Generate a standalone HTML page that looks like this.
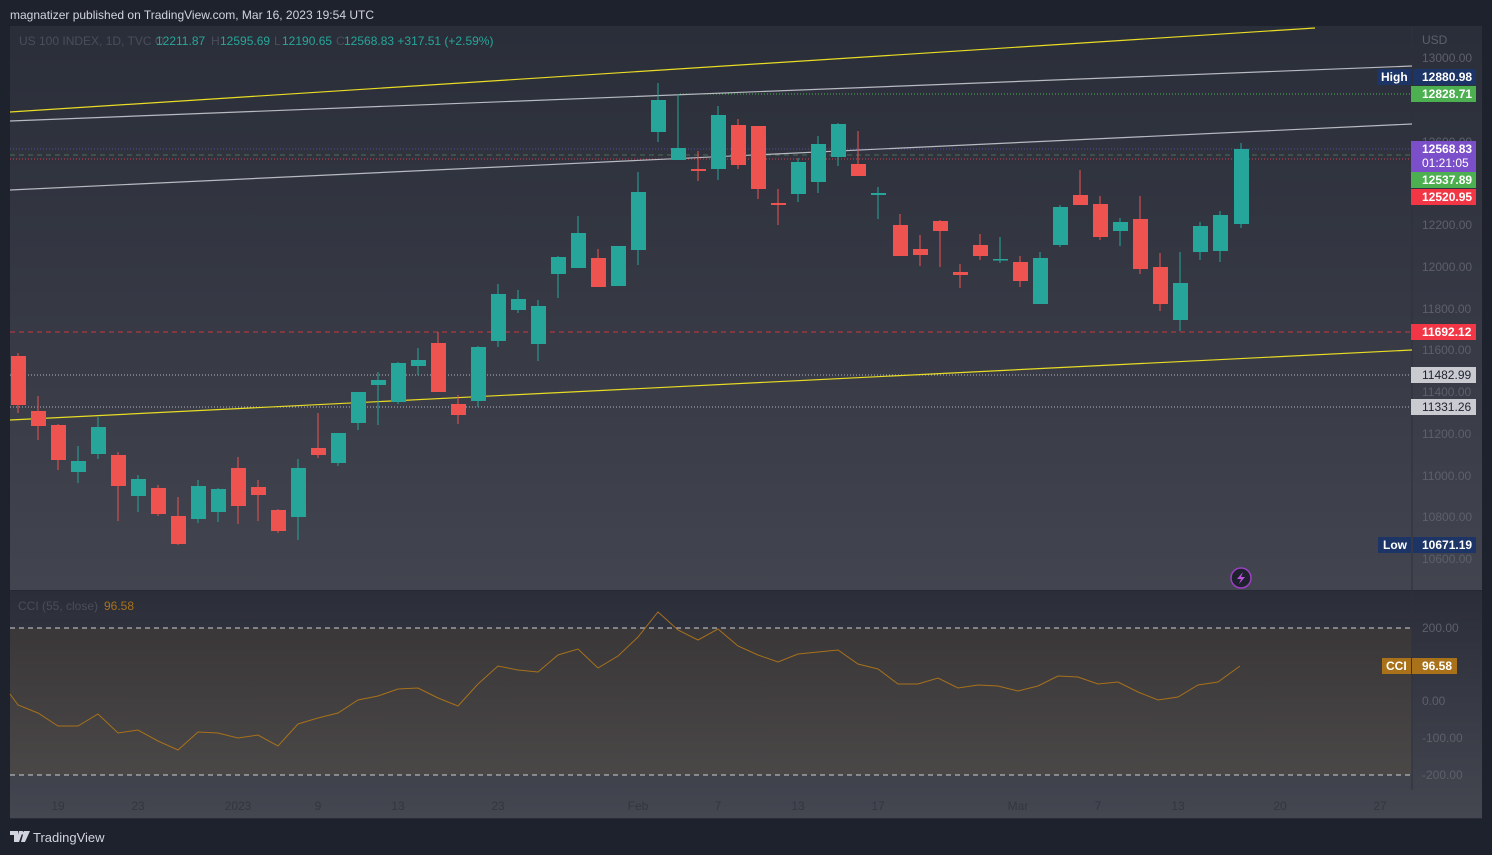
<!DOCTYPE html><html><head><meta charset="utf-8"><style>
body{margin:0;width:1492px;height:855px;background:#1e222d;overflow:hidden;font-family:"Liberation Sans",sans-serif}
svg{position:absolute;left:0;top:0}
text{font-family:"Liberation Sans",sans-serif}
</style></head><body>
<svg width="1492" height="855" viewBox="0 0 1492 855">
<defs>
<linearGradient id="g1" x1="0" y1="0" x2="0" y2="1"><stop offset="0" stop-color="#2a2e39"/><stop offset="1" stop-color="#42444f"/></linearGradient>
<linearGradient id="g2" x1="0" y1="0" x2="0" y2="1"><stop offset="0" stop-color="#2b2e39"/><stop offset="1" stop-color="#444650"/></linearGradient>
<linearGradient id="g3" x1="0" y1="0" x2="0" y2="1"><stop offset="0" stop-color="#3a3739"/><stop offset="1" stop-color="#4a4747"/></linearGradient>
</defs>
<text x="10" y="19" font-size="12" fill="#d1d4dc">magnatizer published on TradingView.com, Mar 16, 2023 19:54 UTC</text>
<rect x="10" y="26" width="1472" height="565" fill="url(#g1)"/>
<rect x="10" y="591" width="1472" height="228" fill="url(#g2)"/>
<rect x="10" y="628" width="1402" height="147" fill="url(#g3)"/>
<line x1="1412" y1="26" x2="1412" y2="790" stroke="#2e313b" stroke-width="1"/>
<rect x="10" y="590" width="1472" height="1" fill="#262933"/>
<g font-size="12" fill="#26a69a">
<text x="19" y="45" fill="#4a4e5a">US 100 INDEX, 1D, TVC  O</text>
<text x="156" y="45">12211.87</text><text x="211" y="45" fill="#4a4e5a">H</text><text x="220" y="45">12595.69</text>
<text x="274" y="45" fill="#4a4e5a">L</text><text x="282" y="45">12190.65</text><text x="336" y="45" fill="#4a4e5a">C</text><text x="344" y="45">12568.83  +317.51 (+2.59%)</text>
</g>
<g font-size="12" fill="#5d606b">
<text x="1422" y="44">USD</text>
<text x="1422" y="62">13000.00</text><text x="1422" y="146">12600.00</text>
<text x="1422" y="229">12200.00</text><text x="1422" y="271">12000.00</text><text x="1422" y="313">11800.00</text>
<text x="1422" y="354">11600.00</text><text x="1422" y="396">11400.00</text><text x="1422" y="438">11200.00</text>
<text x="1422" y="480">11000.00</text><text x="1422" y="521">10800.00</text><text x="1422" y="563">10600.00</text>
<text x="1422" y="632">200.00</text><text x="1422" y="705">0.00</text><text x="1422" y="742">-100.00</text><text x="1422" y="779">-200.00</text>
</g>
<line x1="680" y1="94" x2="1412" y2="94" stroke="#4caf50" stroke-dasharray="1 2"/>
<line x1="10" y1="149" x2="1412" y2="149" stroke="#5b4a9a" stroke-dasharray="1 2"/>
<line x1="10" y1="155" x2="1412" y2="155" stroke="#4f6b56" stroke-dasharray="5 4"/>
<line x1="10" y1="159" x2="1412" y2="159" stroke="#d2404b" stroke-dasharray="1 2"/>
<line x1="10" y1="332" x2="1412" y2="332" stroke="#c8363f" stroke-dasharray="5 4"/>
<line x1="10" y1="375" x2="1412" y2="375" stroke="#b2b5be" stroke-dasharray="1 2"/>
<line x1="10" y1="407" x2="1412" y2="407" stroke="#b2b5be" stroke-dasharray="1 2"/>
<line x1="10" y1="628" x2="1412" y2="628" stroke="#cfd1d6" stroke-dasharray="5 4"/>
<line x1="10" y1="775" x2="1412" y2="775" stroke="#cfd1d6" stroke-dasharray="5 4"/>
<line x1="10" y1="112" x2="1315" y2="28" stroke="#e8dc24" stroke-width="1.2"/>
<line x1="10" y1="420" x2="1412" y2="350" stroke="#e8dc24" stroke-width="1.2"/>
<line x1="10" y1="121" x2="1412" y2="66" stroke="#b8bac2" stroke-width="1.2"/>
<line x1="10" y1="190" x2="1412" y2="124" stroke="#b8bac2" stroke-width="1.2"/>
<g id="c">
<g fill="#ef5350" stroke="#ef5350">
<line x1="18" y1="353" x2="18" y2="413"/><rect x="11" y="356" width="15" height="49" stroke="none"/>
<line x1="38" y1="396" x2="38" y2="440"/><rect x="31" y="411" width="15" height="15" stroke="none"/>
<line x1="58" y1="424" x2="58" y2="470"/><rect x="51" y="425" width="15" height="35" stroke="none"/>
<line x1="118" y1="452" x2="118" y2="521"/><rect x="111" y="455" width="15" height="31" stroke="none"/>
<line x1="158" y1="485" x2="158" y2="516"/><rect x="151" y="488" width="15" height="26" stroke="none"/>
<line x1="178" y1="497" x2="178" y2="545"/><rect x="171" y="516" width="15" height="28" stroke="none"/>
<line x1="238" y1="457" x2="238" y2="524"/><rect x="231" y="468" width="15" height="38" stroke="none"/>
<line x1="258" y1="480" x2="258" y2="521"/><rect x="251" y="487" width="15" height="8" stroke="none"/>
<line x1="278" y1="509" x2="278" y2="533"/><rect x="271" y="510" width="15" height="21" stroke="none"/>
<line x1="318" y1="413" x2="318" y2="458"/><rect x="311" y="448" width="15" height="7" stroke="none"/>
<line x1="438" y1="332" x2="438" y2="392"/><rect x="431" y="343" width="15" height="49" stroke="none"/>
<line x1="458" y1="395" x2="458" y2="424"/><rect x="451" y="404" width="15" height="11" stroke="none"/>
<line x1="598" y1="249" x2="598" y2="287"/><rect x="591" y="258" width="15" height="29" stroke="none"/>
<line x1="698" y1="151" x2="698" y2="181"/><rect x="691" y="169" width="15" height="2" stroke="none"/>
<line x1="738" y1="119" x2="738" y2="169"/><rect x="731" y="125" width="15" height="40" stroke="none"/>
<line x1="758" y1="126" x2="758" y2="199"/><rect x="751" y="126" width="15" height="63" stroke="none"/>
<line x1="778" y1="189" x2="778" y2="225"/><rect x="771" y="203" width="15" height="2" stroke="none"/>
<line x1="858" y1="131" x2="858" y2="176"/><rect x="851" y="164" width="15" height="12" stroke="none"/>
<line x1="900" y1="214" x2="900" y2="256"/><rect x="893" y="225" width="15" height="31" stroke="none"/>
<line x1="920" y1="235" x2="920" y2="266"/><rect x="913" y="249" width="15" height="6" stroke="none"/>
<line x1="940" y1="220" x2="940" y2="267"/><rect x="933" y="221" width="15" height="10" stroke="none"/>
<line x1="960" y1="264" x2="960" y2="288"/><rect x="953" y="272" width="15" height="3" stroke="none"/>
<line x1="980" y1="234" x2="980" y2="260"/><rect x="973" y="245" width="15" height="11" stroke="none"/>
<line x1="1020" y1="256" x2="1020" y2="287"/><rect x="1013" y="262" width="15" height="19" stroke="none"/>
<line x1="1080" y1="170" x2="1080" y2="205"/><rect x="1073" y="195" width="15" height="10" stroke="none"/>
<line x1="1100" y1="196" x2="1100" y2="240"/><rect x="1093" y="204" width="15" height="33" stroke="none"/>
<line x1="1140" y1="196" x2="1140" y2="274"/><rect x="1133" y="219" width="15" height="50" stroke="none"/>
<line x1="1160" y1="253" x2="1160" y2="311"/><rect x="1153" y="267" width="15" height="37" stroke="none"/>
</g>
<g fill="#26a69a" stroke="#26a69a">
<line x1="78" y1="446" x2="78" y2="483"/><rect x="71" y="461" width="15" height="11" stroke="none"/>
<line x1="98" y1="417" x2="98" y2="459"/><rect x="91" y="427" width="15" height="27" stroke="none"/>
<line x1="138" y1="475" x2="138" y2="512"/><rect x="131" y="479" width="15" height="17" stroke="none"/>
<line x1="198" y1="480" x2="198" y2="523"/><rect x="191" y="486" width="15" height="33" stroke="none"/>
<line x1="218" y1="488" x2="218" y2="522"/><rect x="211" y="489" width="15" height="23" stroke="none"/>
<line x1="298" y1="459" x2="298" y2="540"/><rect x="291" y="468" width="15" height="49" stroke="none"/>
<line x1="338" y1="433" x2="338" y2="466"/><rect x="331" y="433" width="15" height="30" stroke="none"/>
<line x1="358" y1="392" x2="358" y2="430"/><rect x="351" y="392" width="15" height="31" stroke="none"/>
<line x1="378" y1="372" x2="378" y2="425"/><rect x="371" y="380" width="15" height="5" stroke="none"/>
<line x1="398" y1="362" x2="398" y2="404"/><rect x="391" y="363" width="15" height="39" stroke="none"/>
<line x1="418" y1="348" x2="418" y2="375"/><rect x="411" y="360" width="15" height="6" stroke="none"/>
<line x1="478" y1="346" x2="478" y2="407"/><rect x="471" y="347" width="15" height="54" stroke="none"/>
<line x1="498" y1="284" x2="498" y2="347"/><rect x="491" y="294" width="15" height="47" stroke="none"/>
<line x1="518" y1="290" x2="518" y2="313"/><rect x="511" y="299" width="15" height="11" stroke="none"/>
<line x1="538" y1="300" x2="538" y2="361"/><rect x="531" y="306" width="15" height="38" stroke="none"/>
<line x1="558" y1="256" x2="558" y2="298"/><rect x="551" y="257" width="15" height="17" stroke="none"/>
<line x1="578" y1="216" x2="578" y2="268"/><rect x="571" y="233" width="15" height="35" stroke="none"/>
<line x1="618" y1="246" x2="618" y2="286"/><rect x="611" y="246" width="15" height="40" stroke="none"/>
<line x1="638" y1="172" x2="638" y2="265"/><rect x="631" y="192" width="15" height="58" stroke="none"/>
<line x1="658" y1="83" x2="658" y2="142"/><rect x="651" y="100" width="15" height="32" stroke="none"/>
<line x1="678" y1="94" x2="678" y2="160"/><rect x="671" y="148" width="15" height="12" stroke="none"/>
<line x1="718" y1="106" x2="718" y2="180"/><rect x="711" y="115" width="15" height="54" stroke="none"/>
<line x1="798" y1="158" x2="798" y2="202"/><rect x="791" y="162" width="15" height="32" stroke="none"/>
<line x1="818" y1="136" x2="818" y2="193"/><rect x="811" y="144" width="15" height="38" stroke="none"/>
<line x1="838" y1="123" x2="838" y2="166"/><rect x="831" y="124" width="15" height="33" stroke="none"/>
<line x1="878" y1="187" x2="878" y2="219"/><rect x="871" y="193" width="15" height="2" stroke="none"/>
<line x1="1000" y1="237" x2="1000" y2="263"/><rect x="993" y="259" width="15" height="1.5" stroke="none"/>
<line x1="1040" y1="252" x2="1040" y2="304"/><rect x="1033" y="258" width="15" height="46" stroke="none"/>
<line x1="1060" y1="205" x2="1060" y2="247"/><rect x="1053" y="207" width="15" height="38" stroke="none"/>
<line x1="1120" y1="218" x2="1120" y2="246"/><rect x="1113" y="222" width="15" height="9" stroke="none"/>
<line x1="1180" y1="252" x2="1180" y2="331"/><rect x="1173" y="283" width="15" height="37" stroke="none"/>
<line x1="1200" y1="222" x2="1200" y2="260"/><rect x="1193" y="226" width="15" height="26" stroke="none"/>
<line x1="1220" y1="211" x2="1220" y2="262"/><rect x="1213" y="215" width="15" height="36" stroke="none"/>
<line x1="1241" y1="143" x2="1241" y2="228"/><rect x="1234" y="149" width="15" height="75" stroke="none"/>
</g>
</g>
<g font-size="12" font-weight="bold" fill="#fff">
<rect x="1377" y="69" width="34" height="16" fill="#1c3566"/><text x="1381" y="81">High</text>
<rect x="1413" y="69" width="63" height="16" fill="#1c3566"/><text x="1422" y="81">12880.98</text>
<rect x="1411" y="86" width="65" height="16" fill="#4caf50"/><text x="1422" y="98">12828.71</text>
<rect x="1411" y="141" width="65" height="31" fill="#7b4fc9"/><text x="1422" y="153">12568.83</text><text x="1422" y="167" font-weight="normal">01:21:05</text>
<rect x="1411" y="172" width="65" height="16" fill="#4caf50"/><text x="1422" y="184">12537.89</text>
<rect x="1411" y="189" width="65" height="16" fill="#f23645"/><text x="1422" y="201">12520.95</text>
<rect x="1411" y="324" width="65" height="16" fill="#f23645"/><text x="1422" y="336">11692.12</text>
<rect x="1411" y="367" width="65" height="16" fill="#c9cbd1"/><text x="1422" y="379" fill="#1e222d" font-weight="normal">11482.99</text>
<rect x="1411" y="399" width="65" height="16" fill="#c9cbd1"/><text x="1422" y="411" fill="#1e222d" font-weight="normal">11331.26</text>
<rect x="1378" y="537" width="33" height="16" fill="#1c3566"/><text x="1383" y="549">Low</text>
<rect x="1413" y="537" width="63" height="16" fill="#1c3566"/><text x="1422" y="549">10671.19</text>
<rect x="1382" y="658" width="29" height="16" fill="#a8711a"/><text x="1386" y="670">CCI</text>
<rect x="1412" y="658" width="45" height="16" fill="#a8711a"/><text x="1422" y="670">96.58</text>
</g>
<circle cx="1241" cy="578" r="10" fill="#1e222d" stroke="#9c3fc4" stroke-width="1.5"/>
<path d="M1243 572 L1237 579 L1241 579 L1239 584 L1245 577 L1241 577 Z" fill="#c050e0"/>
<text x="18" y="610" font-size="12" fill="#4a4e5a">CCI (55, close)</text><text x="104" y="610" font-size="12" fill="#a8711a">96.58</text>
<polyline fill="none" stroke="#a8711a" stroke-width="1" points="10,694 18,705 38,713 58,726 78,726 98,714 118,733 138,730 158,741 178,750 198,732 218,733 238,738 258,735 278,746 298,724 318,718 338,713 358,700 378,696 398,689 418,688 438,698 458,706 478,684 498,666 518,670 538,672 558,655 578,649 598,668 618,656 638,637 658,612 678,630 698,640 718,629 738,646 758,655 778,662 798,654 818,652 838,650 858,664 878,669 898,684 918,684 938,678 958,688 978,685 998,686 1018,691 1038,686 1058,676 1078,677 1098,684 1118,682 1138,692 1158,700 1178,697 1198,685 1218,682 1240,666"/>
<g font-size="12" fill="#33363f" text-anchor="middle">
<text x="58" y="810">19</text><text x="138" y="810">23</text><text x="238" y="810">2023</text><text x="318" y="810">9</text>
<text x="398" y="810">13</text><text x="498" y="810">23</text><text x="638" y="810">Feb</text><text x="718" y="810">7</text>
<text x="798" y="810">13</text><text x="878" y="810">17</text><text x="1018" y="810">Mar</text><text x="1098" y="810">7</text>
<text x="1178" y="810">13</text><text x="1280" y="810">20</text><text x="1380" y="810">27</text>
</g>
<rect x="10" y="818" width="1472" height="1" fill="#2a2d37"/>
<path d="M10 831 h8 v11 h-4 v-7 h-4 z M19 831 h4 l-4 11 h-3 z M24 831 h6 l-5 11 h-4 z" fill="#d1d4dc"/>
<circle cx="22.5" cy="833" r="1.5" fill="#d1d4dc"/>
<text x="33" y="842" font-size="13" fill="#d1d4dc">TradingView</text>
</svg>
</body></html>
